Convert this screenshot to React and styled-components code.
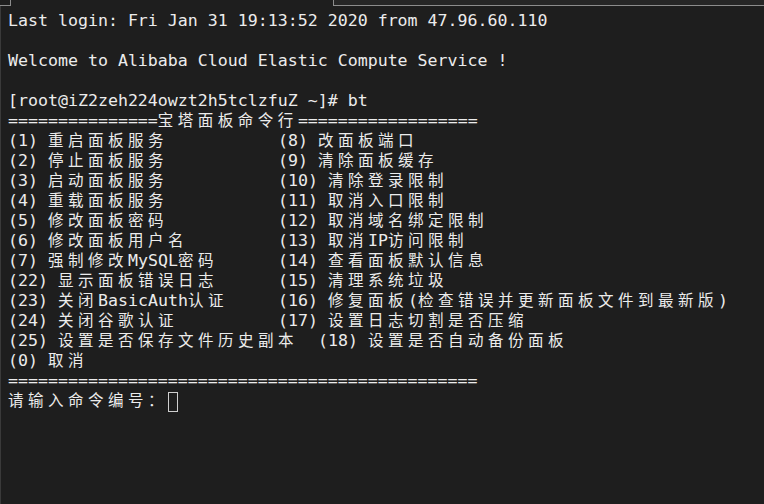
import styled, { createGlobalStyle } from "styled-components";

const GlobalStyle = createGlobalStyle`
  html, body {
    margin: 0;
    padding: 0;
    background: #1e1e1e;
  }
`;

const Terminal = styled.div`
  width: 764px;
  height: 504px;
  background: #1e1e1e;
  display: flex;
  flex-direction: column;
  overflow: hidden;
`;

const TopStrip = styled.div`
  display: flex;
  height: 6px;
  flex-shrink: 0;
`;

const Corner = styled.div`
  width: 11px;
  box-sizing: border-box;
  border-right: 1px solid #8c8c8c;
  border-bottom: 1px solid #8c8c8c;
`;

const TabEdge = styled.div`
  margin-left: auto;
  width: 431px;
  box-sizing: border-box;
  background: #262626;
  border-left: 1px solid #8c8c8c;
  border-bottom: 1px solid #8c8c8c;
`;

const Screen = styled.div`
  flex: 1;
  padding: 5px 0 0 7px;
  border-left: 1px solid #3a3a3a;
  font-family: "DejaVu Sans Mono", "Liberation Mono", monospace;
  font-size: 16.6px;
  color: #ececec;
`;

const Line = styled.div`
  height: 20px;
  line-height: 20px;
  white-space: pre;
`;

const Row = styled(Line)`
  display: flex;
`;

const LeftCol = styled.span`
  min-width: 270px;
  white-space: pre;
`;

const Wide = styled.span`
  font-family: "Noto Sans CJK SC", sans-serif;
  font-size: 15.5px;
  letter-spacing: 4.5px;
  line-height: 16px;
`;

const Cursor = styled.span`
  display: inline-block;
  width: 10px;
  height: 20px;
  box-sizing: border-box;
  border: 1px solid #cfcfcf;
  vertical-align: top;
  margin-top: 1px;
`;

// ascii cells are 10px, CJK cells are 20px
const Txt = ({ children }) => {
  const parts = children.split(/([\u3000-\u9fff\uff00-\uffef]+)/);
  return parts.map((p, i) =>
    i % 2 === 1 ? <Wide key={i}>{p}</Wide> : p
  );
};

const menu = [
  ["(1) 重启面板服务", "(8) 改面板端口"],
  ["(2) 停止面板服务", "(9) 清除面板缓存"],
  ["(3) 启动面板服务", "(10) 清除登录限制"],
  ["(4) 重载面板服务", "(11) 取消入口限制"],
  ["(5) 修改面板密码", "(12) 取消域名绑定限制"],
  ["(6) 修改面板用户名", "(13) 取消IP访问限制"],
  ["(7) 强制修改MySQL密码", "(14) 查看面板默认信息"],
  ["(22) 显示面板错误日志", "(15) 清理系统垃圾"],
  ["(23) 关闭BasicAuth认证", "(16) 修复面板(检查错误并更新面板文件到最新版)"],
  ["(24) 关闭谷歌认证", "(17) 设置日志切割是否压缩"],
  ["(25) 设置是否保存文件历史副本  ", "(18) 设置是否自动备份面板"],
];

const App = () => {
  return (
    <Terminal>
      <GlobalStyle />
      <TopStrip>
        <Corner />
        <TabEdge />
      </TopStrip>
      <Screen>
        <Line>Last login: Fri Jan 31 19:13:52 2020 from 47.96.60.110</Line>
        <Line> </Line>
        <Line>Welcome to Alibaba Cloud Elastic Compute Service !</Line>
        <Line> </Line>
        <Line>[root@iZ2zeh224owzt2h5tclzfuZ ~]# bt</Line>
        <Line>
          <Txt>{"===============宝塔面板命令行=================="}</Txt>
        </Line>
        {menu.map(([l, r]) => (
          <Row key={l}>
            <LeftCol><Txt>{l}</Txt></LeftCol>
            <span><Txt>{r}</Txt></span>
          </Row>
        ))}
        <Line><Txt>{"(0) 取消"}</Txt></Line>
        <Line>===============================================</Line>
        <Line>
          <Txt>{"请输入命令编号："}</Txt>
          <Cursor />
        </Line>
      </Screen>
    </Terminal>
  );
};

export default App;
